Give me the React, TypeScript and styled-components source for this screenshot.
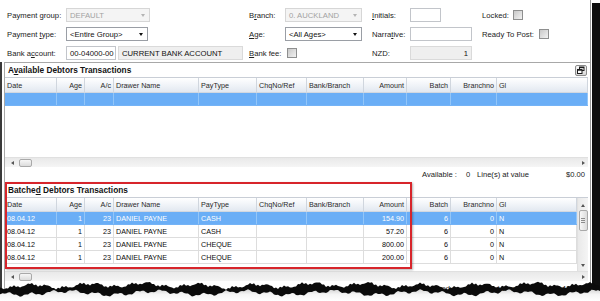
import React from 'react';
import styled, { createGlobalStyle } from 'styled-components';

const GlobalStyle = createGlobalStyle`
  html, body {
    margin: 0;
    padding: 0;
    background: #ffffff;
  }
  body {
    font-family: 'Liberation Sans', Arial, sans-serif;
    color: #1e1e1e;
  }
  u {
    text-decoration-thickness: 1px;
    text-underline-offset: 1px;
  }
`;

const Screen = styled.div`
  position: relative;
  width: 600px;
  height: 301px;
  overflow: hidden;
  display: flex;
  background: #fff;
`;

const WindowBody = styled.div`
  width: 590px;
  height: 301px;
  display: flex;
  flex-direction: column;
  border-right: 1px solid #9c9c9c;
  background: #fff;
`;

const DropShadow = styled.div`
  width: 8px;
  margin: 3px 0 0 1px;
  background: #0e0e0e;
`;

const Form = styled.div`
  display: grid;
  grid-template-columns: 59px 183px 36px 87px 38px 72px 1fr;
  grid-auto-rows: 14px;
  row-gap: 5px;
  align-items: center;
  padding: 8px 0 0 7px;
  height: 62px;
  box-sizing: border-box;
  font-size: 7.7px;
`;

const Label = styled.span`
  color: #222;
  white-space: nowrap;
`;

const Field = styled.div`
  display: flex;
  align-items: center;
  gap: 2px;
`;

const Select = styled.div<{ $w: number; $disabled?: boolean }>`
  width: ${(p) => p.$w}px;
  height: 14px;
  box-sizing: border-box;
  border: 1px solid ${(p) => (p.$disabled ? '#d6d6d6' : '#9a9ea5')};
  background: ${(p) => (p.$disabled ? '#f4f4f4' : '#fff')};
  color: ${(p) => (p.$disabled ? '#a2a2a2' : '#111')};
  display: flex;
  align-items: center;
  justify-content: space-between;
  padding: 0 4px 0 3px;
`;

const Arrow = styled.span<{ $disabled?: boolean }>`
  width: 0;
  height: 0;
  border-left: 2.5px solid transparent;
  border-right: 2.5px solid transparent;
  border-top: 3px solid ${(p) => (p.$disabled ? '#b4b4b4' : '#111')};
`;

const TextBox = styled.div<{ $w: number; $readOnly?: boolean; $right?: boolean }>`
  width: ${(p) => p.$w}px;
  height: 14px;
  box-sizing: border-box;
  border: 1px solid ${(p) => (p.$readOnly ? '#dadada' : '#c2c5ca')};
  background: ${(p) => (p.$readOnly ? '#efefef' : '#fff')};
  color: #111;
  display: flex;
  align-items: center;
  justify-content: ${(p) => (p.$right ? 'flex-end' : 'flex-start')};
  padding: 0 3px;
  white-space: nowrap;
  overflow: hidden;
`;

const CheckBox = styled.span`
  display: inline-block;
  width: 10px;
  height: 10px;
  box-sizing: border-box;
  border: 1px solid #8e8f8f;
  background: linear-gradient(135deg, #c8c8c8, #f2f2f2);
`;

const CheckField = styled.div<{ $gap: number }>`
  display: flex;
  align-items: center;
  gap: ${(p) => p.$gap}px;
  margin-left: ${(p) => (p.$gap === 0 ? 2 : 0)}px;
`;

const LowerArea = styled.div`
  flex: 1;
  min-height: 0;
  display: flex;
  border-left: 2px solid #3a3a3a;
  padding-left: 2px;
`;

const Panel = styled.div`
  flex: 1;
  display: flex;
  flex-direction: column;
  border-top: 1px solid #a8a8a8;
  border-left: 1px solid #a8a8a8;
`;

const SectionTitle = styled.div<{ $h: number }>`
  height: ${(p) => p.$h}px;
  display: flex;
  align-items: center;
  justify-content: space-between;
  padding: 0 3px;
  font-weight: bold;
  font-size: 8.3px;
  color: #141414;
`;

const GridFrame = styled.div`
  margin-right: 2px;
  border-top: 1px solid #c9ced6;
  display: flex;
  flex-direction: column;
`;

const GridBody = styled.div<{ $h: number }>`
  height: ${(p) => p.$h}px;
  display: flex;
`;

const Table = styled.div`
  flex: 1;
  min-width: 0;
  display: flex;
  flex-direction: column;
  background: #fff;
  overflow: hidden;
`;

const HeaderRow = styled.div<{ $h: number }>`
  display: flex;
  flex: none;
  height: ${(p) => p.$h}px;
  box-sizing: border-box;
  background: linear-gradient(#ffffff, #f2f5f9 45%, #e2e8f0);
  border-bottom: 1px solid #d2d8e0;
`;

const HeaderCell = styled.div<{ $w?: number; $align: Align }>`
  ${(p) => (p.$w ? `width: ${p.$w}px; flex: none;` : 'flex: 1;')}
  box-sizing: border-box;
  border-right: 1px solid #d0d6de;
  padding: 0 2px;
  display: flex;
  align-items: center;
  justify-content: ${(p) => (p.$align === 'right' ? 'flex-end' : 'flex-start')};
  font-size: 7.2px;
  color: #2a2a2a;
  white-space: nowrap;
`;

const DataRow = styled.div<{ $selected: boolean }>`
  display: flex;
  flex: none;
  height: 13px;
  box-sizing: border-box;
  background: ${(p) => (p.$selected ? '#6aaef6' : '#fff')};
  color: ${(p) => (p.$selected ? '#ffffff' : '#0c0c0c')};
  border-bottom: 1px solid ${(p) => (p.$selected ? '#74b3f6' : '#dddddd')};
`;

const DataCell = styled.div<{ $w?: number; $align: Align; $selected: boolean }>`
  ${(p) => (p.$w ? `width: ${p.$w}px; flex: none;` : 'flex: 1;')}
  box-sizing: border-box;
  border-right: 1px solid ${(p) => (p.$selected ? '#93c6f8' : '#dddddd')};
  padding: 0 2px;
  display: flex;
  align-items: center;
  justify-content: ${(p) => (p.$align === 'right' ? 'flex-end' : 'flex-start')};
  font-size: 7.2px;
  white-space: nowrap;
`;

const HScrollBar = styled.div`
  height: 10px;
  box-sizing: border-box;
  display: flex;
  align-items: center;
  padding: 0 3px 0 6px;
  background: linear-gradient(#e9e9e9, #f5f5f5);
  border-top: 1px solid #e0e0e0;
`;

const VScrollBar = styled.div`
  width: 11px;
  flex: none;
  box-sizing: border-box;
  display: flex;
  flex-direction: column;
  align-items: center;
  padding: 6px 0 4px;
  background: linear-gradient(90deg, #e9e9e9, #f5f5f5);
  border-left: 1px solid #e0e0e0;
`;

const Thumb = styled.div<{ $w: number; $h: number; $vertical?: boolean }>`
  width: ${(p) => p.$w}px;
  height: ${(p) => p.$h}px;
  box-sizing: border-box;
  border: 1px solid #a9a9a9;
  border-radius: 2px;
  background: ${(p) =>
    p.$vertical
      ? 'linear-gradient(90deg, #f7f7f7, #dcdcdc)'
      : 'linear-gradient(#f7f7f7, #dcdcdc)'};
  display: flex;
  flex-direction: column;
  align-items: center;
  justify-content: center;
  gap: 1px;
`;

const Grip = styled.span`
  width: 4px;
  height: 1px;
  background: #8c8c8c;
`;

const ScrollArrow = styled.span<{ $dir: 'left' | 'right' | 'up' | 'down' }>`
  width: 0;
  height: 0;
  flex: none;
  border: 2px solid transparent;
  ${(p) => {
    switch (p.$dir) {
      case 'left':
        return 'border-right: 3px solid #555; border-left-width: 0;';
      case 'right':
        return 'border-left: 3px solid #555; border-right-width: 0;';
      case 'up':
        return 'border-bottom: 3px solid #555; border-top-width: 0;';
      default:
        return 'border-top: 3px solid #555; border-bottom-width: 0;';
    }
  }}
`;

const Spacer = styled.div`
  flex: 1;
`;

const Summary = styled.div`
  height: 15px;
  flex: none;
  display: grid;
  grid-template-columns: 417px 44px 11px 70px 1fr;
  align-items: center;
  padding-right: 5px;
  font-size: 7.6px;
  color: #222;
  white-space: nowrap;
`;

const SummaryValue = styled.span`
  text-align: right;
`;

const Annotation = styled.div`
  position: absolute;
  left: 5px;
  top: 182px;
  width: 407px;
  height: 87px;
  box-sizing: border-box;
  border: 2px solid #d7252b;
  box-shadow: 1px 1px 2px rgba(0, 0, 0, 0.3);
  pointer-events: none;
`;

const TornEdge = styled.svg`
  position: absolute;
  left: 0;
  bottom: 0;
`;

type Align = 'left' | 'right';

interface Column {
  title: string;
  width?: number;
  align: Align;
}

const columns: Column[] = [
  { title: 'Date', width: 52, align: 'left' },
  { title: 'Age', width: 28, align: 'right' },
  { title: 'A/c', width: 29, align: 'right' },
  { title: 'Drawer Name', width: 85, align: 'left' },
  { title: 'PayType', width: 58, align: 'left' },
  { title: 'ChqNo/Ref', width: 50, align: 'left' },
  { title: 'Bank/Branch', width: 57, align: 'left' },
  { title: 'Amount', width: 43, align: 'right' },
  { title: 'Batch', width: 44, align: 'right' },
  { title: 'Branchno', width: 46, align: 'right' },
  { title: 'Gl', align: 'left' },
];

const availableRows: string[][] = [['', '', '', '', '', '', '', '', '', '', '']];

const batchedRows: string[][] = [
  ['08.04.12', '1', '23', 'DANIEL PAYNE', 'CASH', '', '', '154.90', '6', '0', 'N'],
  ['08.04.12', '1', '23', 'DANIEL PAYNE', 'CASH', '', '', '57.20', '6', '0', 'N'],
  ['08.04.12', '1', '23', 'DANIEL PAYNE', 'CHEQUE', '', '', '800.00', '6', '0', 'N'],
  ['08.04.12', '1', '23', 'DANIEL PAYNE', 'CHEQUE', '', '', '200.00', '6', '0', 'N'],
];

// jagged "torn paper" edge along the bottom of the screenshot
const tornEdge = (() => {
  const top: string[] = [];
  const bottom: string[] = [];
  for (let x = 0; x <= 600; x += 2) {
    const t =
      4.5 +
      Math.sin(x * 0.37) * 1.2 +
      Math.sin(x * 0.113 + 1) * 1.8 +
      Math.sin(x * 1.7) * 0.8 +
      Math.sin(x * 0.031 + 0.5) * 0.8;
    const b =
      12 +
      Math.sin(x * 0.29 + 2) * 1.4 +
      Math.sin(x * 0.071) * 1.8 +
      Math.sin(x * 2.3) * 0.7;
    top.push(`${x},${t.toFixed(1)}`);
    bottom.push(`${x},${b.toFixed(1)}`);
  }
  const paper = `M${bottom.join(' L')} L600,20 L0,20 Z`;
  const band = `M${top.join(' L')} L${[...bottom].reverse().join(' L')} Z`;
  return { paper, band };
})();

const RestoreIcon = () => (
  <svg width="12" height="11" viewBox="0 0 12 11">
    <defs>
      <linearGradient id="restoreBg" x1="0" y1="0" x2="0" y2="1">
        <stop offset="0" stopColor="#fafafa" />
        <stop offset="1" stopColor="#d6d6d6" />
      </linearGradient>
    </defs>
    <rect x="0.5" y="0.5" width="11" height="10" rx="1.5" fill="url(#restoreBg)" stroke="#8a8a8a" />
    <rect x="4.5" y="2" width="4.5" height="3.5" fill="#fff" stroke="#1c1c1c" />
    <rect x="4.5" y="2" width="4.5" height="1.2" fill="#1c1c1c" />
    <rect x="2.5" y="4.5" width="4.5" height="4" fill="#fff" stroke="#1c1c1c" />
    <rect x="2.5" y="4.5" width="4.5" height="1.2" fill="#1c1c1c" />
  </svg>
);

interface GridProps {
  rows: string[][];
  selected: number;
  headerHeight: number;
  bodyHeight: number;
  vScroll?: boolean;
}

const TransactionGrid = ({ rows, selected, headerHeight, bodyHeight, vScroll }: GridProps) => (
  <GridFrame>
    <GridBody $h={bodyHeight}>
      <Table>
        <HeaderRow $h={headerHeight}>
          {columns.map((col, idx) => (
            <HeaderCell key={idx} $w={col.width} $align={col.align}>
              {col.title}
            </HeaderCell>
          ))}
        </HeaderRow>
        {rows.map((row, ri) => (
          <DataRow key={ri} $selected={ri === selected}>
            {columns.map((col, ci) => (
              <DataCell key={ci} $w={col.width} $align={col.align} $selected={ri === selected}>
                {row[ci]}
              </DataCell>
            ))}
          </DataRow>
        ))}
      </Table>
      {vScroll && (
        <VScrollBar>
          <ScrollArrow $dir="up" />
          <Thumb $w={9} $h={21} $vertical style={{ marginTop: 3 }}>
            <Grip />
            <Grip />
            <Grip />
          </Thumb>
          <Spacer />
          <ScrollArrow $dir="down" />
        </VScrollBar>
      )}
    </GridBody>
    <HScrollBar>
      <ScrollArrow $dir="left" />
      <Thumb $w={13} $h={8} style={{ marginLeft: 5 }} />
      <Spacer />
      <ScrollArrow $dir="right" />
    </HScrollBar>
  </GridFrame>
);

export default function App() {
  return (
    <Screen>
      <GlobalStyle />
      <WindowBody>
        <Form>
          <Label>Payment group:</Label>
          <Field>
            <Select $w={84} $disabled>
              DEFAULT
              <Arrow $disabled />
            </Select>
          </Field>
          <Label>
            B<u>r</u>anch:
          </Label>
          <Field>
            <Select $w={77} $disabled>
              0. AUCKLAND
              <Arrow $disabled />
            </Select>
          </Field>
          <Label>
            <u>I</u>nitials:
          </Label>
          <Field>
            <TextBox $w={31} />
          </Field>
          <CheckField $gap={4}>
            <Label>Locked:</Label>
            <CheckBox />
          </CheckField>

          <Label>
            Payment <u>t</u>ype:
          </Label>
          <Field>
            <Select $w={82}>
              &lt;Entire Group&gt;
              <Arrow />
            </Select>
          </Field>
          <Label>
            <u>A</u>ge:
          </Label>
          <Field>
            <Select $w={77}>
              &lt;All Ages&gt;
              <Arrow />
            </Select>
          </Field>
          <Label>
            Narra<u>t</u>ive:
          </Label>
          <Field>
            <TextBox $w={62} />
          </Field>
          <CheckField $gap={5}>
            <Label>Ready To Post:</Label>
            <CheckBox />
          </CheckField>

          <Label>
            Bank a<u>c</u>count:
          </Label>
          <Field>
            <TextBox $w={50}>00-04000-00</TextBox>
            <TextBox $w={125} $readOnly>
              CURRENT BANK ACCOUNT
            </TextBox>
          </Field>
          <Label>
            <u>B</u>ank fee:
          </Label>
          <CheckField $gap={0}>
            <CheckBox />
          </CheckField>
          <Label>NZD:</Label>
          <Field>
            <TextBox $w={62} $readOnly $right>
              1
            </TextBox>
          </Field>
          <span />
        </Form>

        <LowerArea>
          <Panel>
            <SectionTitle $h={14}>
              <span>
                A<u>v</u>ailable Debtors Transactions
              </span>
              <RestoreIcon />
            </SectionTitle>
            <TransactionGrid rows={availableRows} selected={0} headerHeight={15} bodyHeight={79} />
            <Summary>
              <span />
              <span>Available :</span>
              <span>0</span>
              <span>Line(s) at value</span>
              <SummaryValue>$0.00</SummaryValue>
            </Summary>
            <SectionTitle $h={15}>
              <span>
                Batche<u>d</u> Debtors Transactions
              </span>
            </SectionTitle>
            <TransactionGrid
              rows={batchedRows}
              selected={0}
              headerHeight={14}
              bodyHeight={73}
              vScroll
            />
            <Summary>
              <span />
              <span>Batched :</span>
              <span>5</span>
              <span>Line(s) at value</span>
              <SummaryValue>$1412.10</SummaryValue>
            </Summary>
          </Panel>
        </LowerArea>
      </WindowBody>
      <DropShadow />
      <Annotation />
      <TornEdge width="600" height="20" viewBox="0 0 600 20">
        <defs>
          <linearGradient id="paperFade" x1="0" y1="0" x2="0" y2="1">
            <stop offset="0" stopColor="#d4d4d4" />
            <stop offset="0.45" stopColor="#f5f5f5" />
            <stop offset="1" stopColor="#ffffff" />
          </linearGradient>
        </defs>
        <path d={tornEdge.paper} fill="url(#paperFade)" />
        <path d={tornEdge.band} fill="#0b0b0b" />
      </TornEdge>
    </Screen>
  );
}
